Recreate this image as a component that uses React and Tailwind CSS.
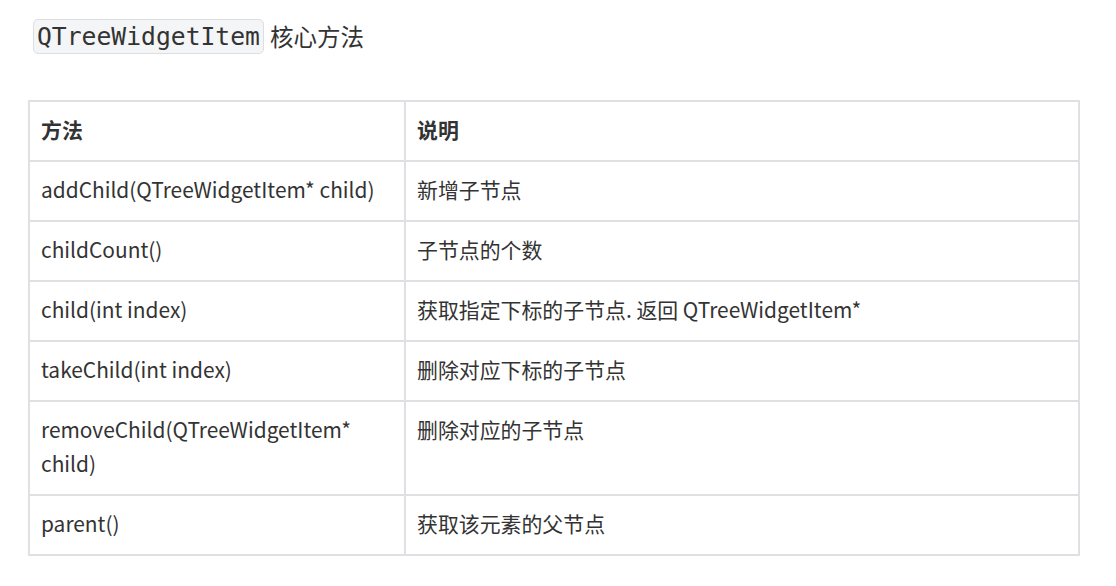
import React from 'react'

const rows = [
  ['addChild(QTreeWidgetItem* child)', '新增子节点'],
  ['childCount()', '子节点的个数'],
  ['child(int index)', '获取指定下标的子节点. 返回 QTreeWidgetItem*'],
  ['takeChild(int index)', '删除对应下标的子节点'],
  ['removeChild(QTreeWidgetItem* child)', '删除对应的子节点'],
  ['parent()', '获取该元素的父节点'],
]

const App = () => {
  return (
    <div
      className="w-[1116px] h-[586px] bg-white text-[#333] overflow-hidden"
      style={{ fontFamily: '"Noto Sans CJK SC", "Noto Sans", sans-serif' }}
    >
      {/* Heading */}
      <div className="flex items-center pl-[33px] pt-[19px] h-[54px]">
        <code
          className="h-[35px] px-[3px] flex items-center bg-[#f4f5f6] border border-[#dcdee2] rounded-[5px] text-[24.7px] text-[#333]"
          style={{ fontFamily: '"DejaVu Sans Mono", "Liberation Mono", monospace' }}
        >
          QTreeWidgetItem
        </code>
        <span className="ml-[6px] text-[23.5px] leading-[35px]">核心方法</span>
      </div>

      {/* Table */}
      <table className="ml-[28px] mt-[46px] w-[1052px] border-collapse text-[20.9px] leading-[34px]">
        <thead>
          <tr>
            <th className="w-[376px] border-2 border-[#dfe0e4] pl-[11px] pr-[12px] pt-[10px] pb-[14px] text-left font-bold">方法</th>
            <th className="border-2 border-[#dfe0e4] pl-[11px] pr-[12px] pt-[10px] pb-[14px] text-left font-bold">说明</th>
          </tr>
        </thead>
        <tbody>
          {rows.map(([m, d]) => (
            <tr key={m}>
              <td className="border-2 border-[#dfe0e4] pl-[11px] pr-[12px] pt-[10px] pb-[14px] align-top">{m}</td>
              <td className="border-2 border-[#dfe0e4] pl-[11px] pr-[12px] pt-[10px] pb-[14px] align-top">{d}</td>
            </tr>
          ))}
        </tbody>
      </table>
    </div>
  )
}

export default App
